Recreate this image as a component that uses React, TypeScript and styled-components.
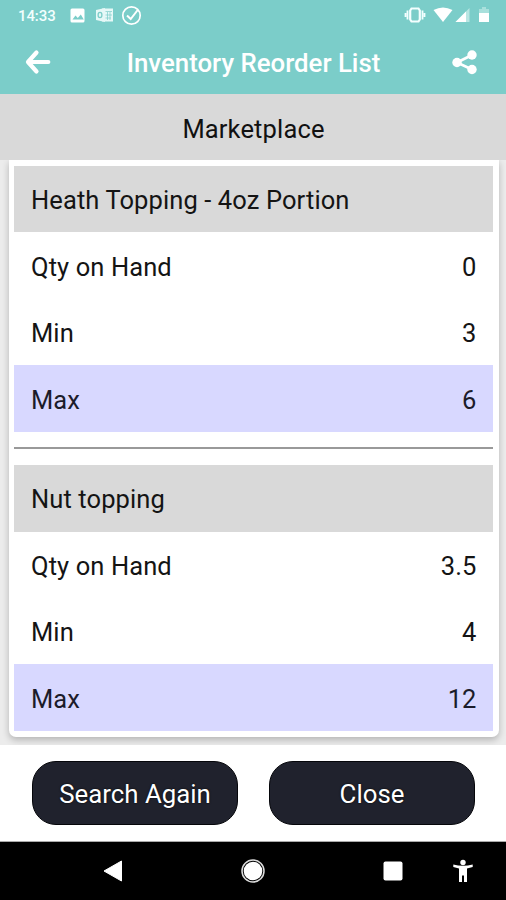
import React from "react";
import styled, { createGlobalStyle } from "styled-components";

const GlobalStyle = createGlobalStyle`
  *, *::before, *::after { box-sizing: border-box; }
  html, body { margin: 0; padding: 0; }
  body { font-family: Roboto, "Liberation Sans", sans-serif; background: #fff; overflow: hidden; }
  svg { display: block; }
`;

const Screen = styled.div`
  width: 506px;
  height: 900px;
  display: flex;
  flex-direction: column;
  overflow: hidden;
`;

const Header = styled.header`
  height: 94px;
  flex: none;
  background: #7bcdc9;
  color: #fff;
`;

const StatusBar = styled.div`
  height: 31px;
  display: flex;
  align-items: center;
  justify-content: space-between;
  padding: 0 14px 0 18px;
`;

const StatusGroup = styled.div`
  display: flex;
  align-items: center;
`;

const Clock = styled.span`
  width: 51px;
  font-size: 15px;
  font-weight: 500;
  line-height: 20px;
  letter-spacing: -0.1px;
  color: #f2fffe;
`;

const TitleBar = styled.div`
  height: 63px;
  display: grid;
  grid-template-columns: 76px 1fr 76px;
  align-items: center;
`;

const IconButton = styled.button<{ $end?: boolean }>`
  border: 0;
  background: none;
  color: inherit;
  height: 63px;
  padding: ${(p) => (p.$end ? "0 0 0 21px" : "0 0 2px 25px")};
`;

const Title = styled.h1`
  margin: 1px 0 0 1px;
  text-align: center;
  font-size: 25.8px;
  line-height: 32px;
  font-weight: 500;
  white-space: nowrap;
`;

const Category = styled.div`
  height: 66px;
  flex: none;
  display: flex;
  align-items: center;
  justify-content: center;
  padding: 3px 0 0 1px;
  background: #d9d9d9;
  color: #111;
  font-size: 25.5px;
  letter-spacing: 0.15px;
`;

const ListArea = styled.main`
  height: 585px;
  flex: none;
  padding: 0 7.5px 0 8.5px;
  background: #ececec;
  overflow: hidden;
`;

const Card = styled.section`
  height: 577px;
  padding: 6px 5.5px 0;
  background: #fff;
  border-radius: 0 0 7px 7px;
  box-shadow: 0 3px 7px rgba(0, 0, 0, 0.24);
`;

const Item = styled.article`
  & + & {
    margin-top: 15.2px;
    padding-top: 16.2px;
    border-top: 2px solid #999;
  }
`;

const Row = styled.div<{ $tone?: "heading" | "highlight" }>`
  height: 66.45px;
  display: flex;
  align-items: center;
  justify-content: space-between;
  padding: 2.3px 16.5px 0 17px;
  font-size: 25.5px;
  line-height: 32px;
  letter-spacing: 0.1px;
  color: ${(p) => (p.$tone === "highlight" ? "#1c1c2a" : "#141414")};
  background: ${(p) =>
    p.$tone === "heading" ? "#d9d9d9" : p.$tone === "highlight" ? "#d8d8ff" : "#fff"};
`;

const Actions = styled.footer`
  height: 97px;
  flex: none;
  display: grid;
  grid-template-columns: 206px 206px;
  column-gap: 31px;
  padding: 16px 0 0 32px;
  background: #fff;
  border-bottom: 1px solid #aaa;
`;

const PillButton = styled.button`
  height: 64px;
  padding: 2px 0 0;
  border: 1px solid #05060a;
  border-radius: 24px;
  background: #20222d;
  color: #fff;
  font-family: inherit;
  font-size: 25.8px;
  text-shadow: 0 0 2px #000;
`;

const NavBar = styled.nav`
  flex: 1;
  display: grid;
  grid-template-columns: 225px 56px 171px 1fr;
  align-items: center;
  background: #000;
`;

const NavSlot = styled.div<{ $align?: "start" | "end" }>`
  display: flex;
  justify-content: ${(p) => p.$align ?? "center"};
`;

const StatusIcons = () => (
  <svg width="75" height="22" viewBox="0 0 75 22">
    <rect x="1.500" y="3.500" width="14" height="14" rx="1.500" fill="#fff" />
    <path d="M3.500 14.500l3-4 2.300 2.500 3-3.500 3 5z" fill="#7bcdc9" />
    <g fill="#e6f8f7">
      <path d="M33 3.500h11v13H33z" />
      <path d="M27 5l9-2v14l-9-2z" />
    </g>
    <g fill="none" stroke="#7bcdc9">
      <ellipse cx="31" cy="10" rx="1.900" ry="2.600" strokeWidth="1.300" />
      <path d="M36.500 6.500H43M36.500 10H43M36.500 13H42M38.500 7v8M41 7v8" strokeWidth=".7" />
    </g>
    <circle cx="62.500" cy="10.500" r="8.700" fill="none" stroke="#fff" strokeWidth="1.700" />
    <path d="M58 10.500l3.700 3.500 7-9" fill="none" stroke="#fff" strokeWidth="2" />
  </svg>
);

const SystemIcons = () => (
  <svg width="90" height="22" viewBox="0 0 90 22">
    <g fill="none" stroke="#f4ffff">
      <path d="M9.500 3.500h7l1.300 2v9l-1.300 2h-7l-1.300-2v-9z" strokeWidth="2.200" />
      <path d="M5.500 5.500v9M20.500 5.500v9M3.500 8v4M22.500 8v4" strokeWidth="1.800" />
    </g>
    <path d="M31.500 5q9.500-5.200 19 0L41 17z" fill="#fff" />
    <path d="M67.500 3v14H53.500z" fill="#b9e6e3" />
    <path d="M64 6.500V17H53.500z" fill="#fff" />
    <path d="M77 4h3V2h4v2h3v5H77z" fill="#a9e0dc" />
    <path d="M77 8h10v9H77z" fill="#fff" />
  </svg>
);

const BackArrow = () => (
  <svg width="27" height="26" viewBox="0 0 27 26">
    <path
      d="M23.300 13H4M11.500 3.500L3 13l8.500 9.500"
      fill="none"
      stroke="#fff"
      strokeWidth="4.200"
      strokeLinecap="round"
      strokeLinejoin="round"
    />
  </svg>
);

const ShareIcon = () => (
  <svg width="28" height="28" viewBox="0 0 28 28">
    <path d="M21 6L6 13.500 21 20.500" fill="none" stroke="#fff" strokeWidth="2.700" />
    <circle cx="21" cy="6" r="4.700" fill="#fff" />
    <circle cx="6" cy="13.500" r="4.700" fill="#fff" />
    <circle cx="21" cy="20.500" r="4.700" fill="#fff" />
  </svg>
);

const AccessibilityIcon = () => (
  <svg width="22" height="24" viewBox="0 0 22 24" fill="#fff">
    <circle cx="11" cy="3.500" r="2.700" />
    <path d="M1.300 5.500Q11 8.200 20.700 5.500V8L15 9.500V23H12V16.500H10V23H7V9.500L1.300 8z" />
  </svg>
);

const items = [
  { name: "Heath Topping - 4oz Portion", onHand: "0", min: "3", max: "6" },
  { name: "Nut topping", onHand: "3.5", min: "4", max: "12" },
];

export default function App() {
  return (
    <Screen>
      <GlobalStyle />
      <Header>
        <StatusBar>
          <StatusGroup>
            <Clock>14:33</Clock>
            <StatusIcons />
          </StatusGroup>
          <SystemIcons />
        </StatusBar>
        <TitleBar>
          <IconButton aria-label="Back">
            <BackArrow />
          </IconButton>
          <Title>Inventory Reorder List</Title>
          <IconButton $end aria-label="Share">
            <ShareIcon />
          </IconButton>
        </TitleBar>
      </Header>
      <Category>Marketplace</Category>
      <ListArea>
        <Card>
          {items.map((item) => (
            <Item key={item.name}>
              <Row $tone="heading">{item.name}</Row>
              <Row>
                <span>Qty on Hand</span>
                <span>{item.onHand}</span>
              </Row>
              <Row>
                <span>Min</span>
                <span>{item.min}</span>
              </Row>
              <Row $tone="highlight">
                <span>Max</span>
                <span>{item.max}</span>
              </Row>
            </Item>
          ))}
        </Card>
      </ListArea>
      <Actions>
        <PillButton>Search Again</PillButton>
        <PillButton>Close</PillButton>
      </Actions>
      <NavBar>
        <NavSlot>
          <svg width="20" height="22" viewBox="0 0 20 22">
            <path d="M1 11L18.500 1v20z" fill="#fff" stroke="#fff" strokeLinejoin="round" />
          </svg>
        </NavSlot>
        <NavSlot>
          <svg width="24" height="24" viewBox="0 0 24 24">
            <circle cx="12" cy="12" r="11" fill="none" stroke="#ddd" strokeWidth="1.500" />
            <circle cx="12" cy="12" r="9.300" fill="#fff" />
          </svg>
        </NavSlot>
        <NavSlot $align="end">
          <svg width="69" height="20" viewBox="0 0 69 20">
            <rect x=".5" y=".5" width="19" height="19" rx="2" fill="#fff" />
          </svg>
        </NavSlot>
        <NavSlot $align="start">
          <AccessibilityIcon />
        </NavSlot>
      </NavBar>
    </Screen>
  );
}
